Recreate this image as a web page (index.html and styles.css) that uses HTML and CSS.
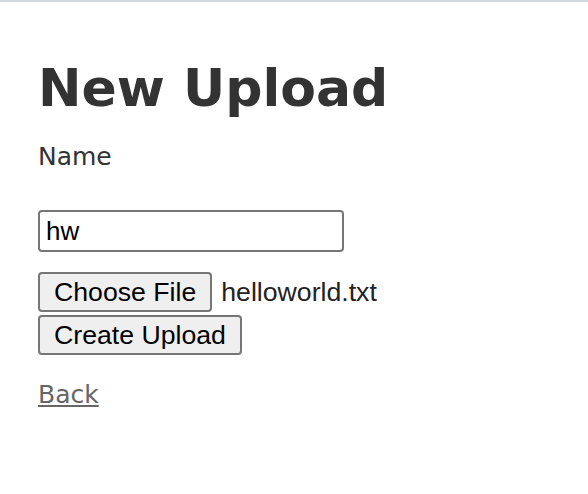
FILE: index.html
```html
<!DOCTYPE html>
<html lang="en">
<head>
<meta charset="utf-8">
<title>New Upload</title>
<link rel="stylesheet" href="styles.css">
</head>
<body>
<div class="topbar"></div>
<main class="page">
  <h1 class="title">New Upload</h1>
  <form class="form">
    <label class="label" for="name">Name</label>
    <input class="text-input" id="name" type="text" value="hw">
    <div class="file-row">
      <button class="btn" type="button">Choose File</button>
      <span class="file-name">helloworld.txt</span>
    </div>
    <div class="submit-row">
      <button class="btn" type="button">Create Upload</button>
    </div>
  </form>
  <a class="back" href="#">Back</a>
</main>
</body>
</html>
```
FILE: styles.css
```css
html, body {
  margin: 0;
  padding: 0;
  background: #ffffff;
}
body {
  font-family: "DejaVu Sans", Verdana, sans-serif;
  color: #333333;
}
.topbar {
  height: 2px;
  background: #d3d6da;
}
.page {
  display: flex;
  flex-direction: column;
  align-items: flex-start;
  padding: 55px 38px 0 38px;
}
.title {
  margin: 0;
  font-size: 52px;
  line-height: 62px;
  font-weight: bold;
  color: #333333;
}
.form {
  display: flex;
  flex-direction: column;
  align-items: flex-start;
  margin-top: 24px;
}
.label {
  font-size: 25px;
  line-height: 28px;
  color: #333333;
}
.text-input {
  box-sizing: border-box;
  margin: 39px 0 0 0;
  width: 306px;
  height: 42px;
  padding: 2px 6px;
  border: 2px solid #767676;
  border-radius: 4px;
  font-family: "Liberation Sans", Arial, sans-serif;
  font-size: 26px;
  color: #000000;
  background: #ffffff;
  outline: none;
}
.file-row {
  display: flex;
  align-items: center;
  gap: 9px;
  margin-top: 20px;
}
.submit-row {
  margin-top: 3px;
}
.btn {
  box-sizing: border-box;
  height: 40px;
  margin: 0;
  padding: 0 14px;
  border: 2px solid #767676;
  border-radius: 4px;
  background: #efefef;
  color: #000000;
  font-family: "Liberation Sans", Arial, sans-serif;
  font-size: 26.67px;
  line-height: 36px;
}
.file-name {
  font-family: "Liberation Sans", Arial, sans-serif;
  font-size: 26.67px;
  color: #222222;
}
.back {
  margin-top: 26px;
  font-size: 25px;
  line-height: 28px;
  color: #666666;
  text-decoration: underline;
}
```
